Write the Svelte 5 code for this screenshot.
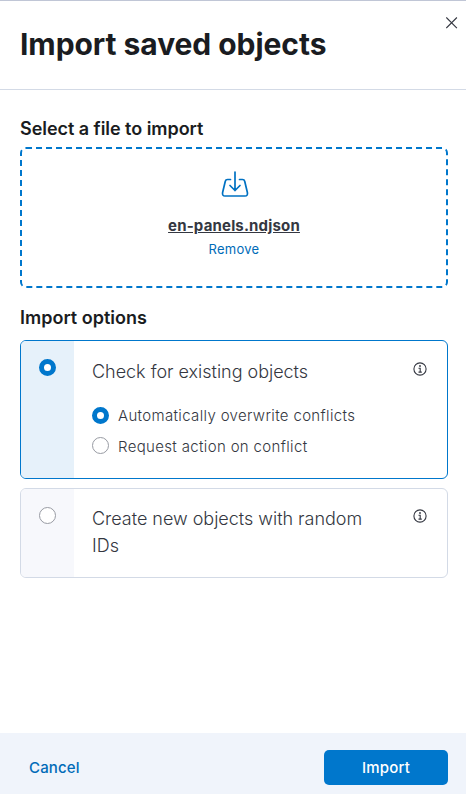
<script>
  let mode = $state('check');
  let conflict = $state('overwrite');
</script>

{#snippet info()}
  <svg class="info" width="16" height="16" viewBox="0 0 16 16" aria-label="Info"><circle cx="8" cy="8" r="6.1" fill="none" stroke="#343741" stroke-width="1.1"/><circle cx="8" cy="5" r=".9" fill="#343741"/><path d="M6.5 7.3H8.2V11M6.5 11.1H9.8" fill="none" stroke="#343741" stroke-width="1.1"/></svg>
{/snippet}

<section class="flyout">
  <header>
    <h1>Import saved objects</h1>
    <button class="close" aria-label="Close"><svg width="12" height="12" viewBox="0 0 12 12"><path d="M.3.500l10.600 10.600M10.900.500L.3 11.100" stroke="#343741" stroke-width="1.1"/></svg></button>
  </header>
  <main>
    <h2>Select a file to import</h2>
    <div class="drop">
      <svg width="28" height="28" viewBox="0 0 28 28" fill="none" stroke="#0071c2" stroke-width="1.7" stroke-linecap="round" stroke-linejoin="round"><path d="M9.500 9.500H6.500Q4.700 9.500 4.300 11.300L1.600 22.500Q1 26 4 26H24Q27 26 26.400 22.500L23.700 11.300Q23.300 9.500 21.500 9.500H18.500M14 2V20.500M9 15.500L14 20.500L19 15.500"/></svg>
      <strong>en-panels.ndjson</strong>
      <button class="remove">Remove</button>
    </div>
    <h2 class="second">Import options</h2>
    <div class="card first" class:selected={mode === 'check'}>
      <div class="side"><input type="radio" bind:group={mode} value="check" aria-label="Check for existing objects" /></div>
      <div class="body">
        <div class="title"><span>Check for existing objects</span>{@render info()}</div>
        <label class="opt"><input type="radio" bind:group={conflict} value="overwrite" />Automatically overwrite conflicts</label>
        <label class="opt request"><input type="radio" bind:group={conflict} value="request" />Request action on conflict</label>
      </div>
    </div>
    <div class="card next" class:selected={mode === 'new'}>
      <div class="side"><input type="radio" bind:group={mode} value="new" aria-label="Create new objects" /></div>
      <div class="body"><div class="title"><span>Create new objects with random IDs</span>{@render info()}</div></div>
    </div>
  </main>
  <footer><button class="cancel">Cancel</button><button class="import">Import</button></footer>
</section>

<style>
  .flyout { height: 794px; display: flex; flex-direction: column; box-sizing: border-box; border-top: 1px solid #c0c6d6; background: #fff; color: #343741; font-family: Inter, sans-serif; }
  .flyout * { box-sizing: border-box; }
  button { font: inherit; border: 0; background: none; padding: 0; color: #006bb8; }
  header { height: 89px; flex: none; display: flex; justify-content: space-between; border-bottom: 1px solid #d3dae6; padding: 23px 8px 0 20px; }
  h1 { margin: 0; font-size: 30px; line-height: 40px; font-weight: 650; letter-spacing: -.06px; color: #1a1c21; }
  .close { width: 12px; height: 12px; margin-top: -7px; display: flex; }
  main { flex: 1; padding: 27px 18px 0 20px; }
  h2 { margin: 0; font-size: 18px; line-height: 24px; font-weight: 600; letter-spacing: -.04px; color: #1a1c21; }
  .drop { margin-top: 6px; height: 141px; border: 2px dashed #0077cc; border-radius: 6px; display: flex; flex-direction: column; align-items: center; padding-top: 21px; }
  .drop svg { flex: none; margin-left: 2px; }
  strong { font-size: 15px; line-height: 24px; margin-top: 16px; font-weight: 700; letter-spacing: .17px; text-decoration: underline; }
  .remove { font-size: 13px; line-height: 20px; margin-top: 1px; font-weight: 400; letter-spacing: .25px; }
  .second { margin-top: 18px; letter-spacing: 0; }
  .card { display: flex; border: 1px solid #d3dae6; border-radius: 6px; overflow: hidden; }
  .selected { border-color: #0077cc; }
  .first { height: 139px; margin-top: 10px; }
  .next { height: 90px; margin-top: 9px; }
  .side { width: 53px; flex: none; display: flex; justify-content: center; background: #f7f8fc; padding-top: 18px; }
  .selected .side { background: #e6f1fa; }
  input { appearance: none; width: 17px; height: 17px; margin: 0; flex: none; border: 1px solid #989ba3; border-radius: 50%; background: #fff; }
  input:checked { border: 5px solid #0077cc; }
  .body { flex: 1; padding: 17px 19px 0 18px; }
  .next .body { padding-top: 16px; }
  .title { display: flex; justify-content: space-between; font-size: 18px; line-height: 27px; margin-bottom: 18px; font-weight: 300; letter-spacing: -.02px; }
  .title span { width: 290px; }
  .info { flex: none; margin-top: 3px; }
  .opt { display: flex; gap: 9px; align-items: center; height: 24px; font-size: 15px; font-weight: 300; letter-spacing: .34px; margin-bottom: 7px; }
  .request input { margin-top: -1px; }
  footer { height: 61px; flex: none; display: flex; align-items: center; justify-content: space-between; padding: 8px 18px 0 29px; background: #f0f4fb; font-size: 15px; font-weight: 500; }
  .cancel { letter-spacing: .15px; }
  .import { width: 124px; height: 35px; background: #0077cc; color: #fff; border-radius: 5px; letter-spacing: .2px; }
</style>
